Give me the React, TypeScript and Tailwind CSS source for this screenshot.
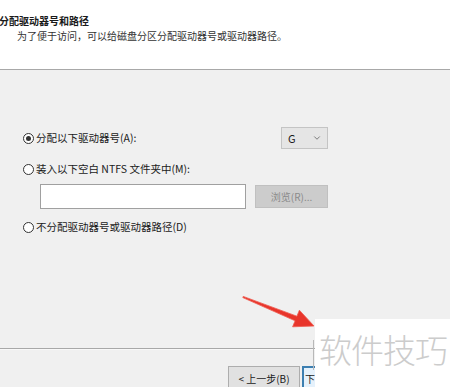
import { ChevronDown } from "lucide-react"

function Radio({ checked }: { checked?: boolean }) {
    return (
        <span className="w-[11px] h-[11px] rounded-full border border-[#333333] bg-white flex items-center justify-center shrink-0">
            {checked && <span className="w-[5px] h-[5px] rounded-full bg-[#333333]" />}
        </span>
    )
}

export default function App() {
    const font = { fontFamily: '"Noto Sans CJK SC", "Noto Sans", sans-serif' }

    return (
        <div className="relative w-[450px] h-[387px] overflow-hidden bg-[#f0f0f0] text-[10.5px] text-[#1a1a1a]" style={font}>
            {/* Header */}
            <div className="h-[70px] bg-white border-b border-[#a8a8a8] pt-[14px]">
                <div className="font-bold text-[10px] leading-[14px] -ml-[1px]">分配驱动器号和路径</div>
                <div className="pl-[17px] mt-[1px] text-[10px] leading-[14px] text-[#333333]">为了便于访问，可以给磁盘分区分配驱动器号或驱动器路径。</div>
            </div>

            {/* Body */}
            <div className="h-[279px] pt-[57px] border-b border-[#a8a8a8]">
                <div className="flex items-center w-[328px] pl-[23px] h-[22px]">
                    <Radio checked />
                    <span className="ml-[2px] leading-[16px]">分配以下驱动器号(A):</span>
                    <div className="ml-auto w-[47px] h-[22px] bg-[#e5e5e5] border border-[#c4c4c4] flex items-center justify-between pl-[6px] pr-[5px]">
                        <span className="text-[11px]">G</span>
                        <ChevronDown size={10} strokeWidth={2} className="text-[#666666]" />
                    </div>
                </div>
                <div className="flex items-center pl-[23px] h-[16px] mt-[12px]">
                    <Radio />
                    <span className="ml-[2px] leading-[16px]">装入以下空白 NTFS 文件夹中(M):</span>
                </div>
                <div className="flex items-center pl-[40px] mt-[7px] gap-[9px]">
                    <div className="w-[206px] h-[25px] bg-white border border-[#a0a0a0]" />
                    <div className="w-[73px] h-[23px] bg-[#cccccc] border border-[#c0c0c0] flex items-center justify-center text-[10px] text-[#8a8a8a]">浏览(R)...</div>
                </div>
                <div className="flex items-center pl-[23px] h-[16px] mt-[10px]">
                    <Radio />
                    <span className="ml-[2px] leading-[16px]">不分配驱动器号或驱动器路径(D)</span>
                </div>
            </div>

            {/* Footer buttons */}
            <div className="border-t border-[#f8f8f8] flex pl-[228px] pt-[16px] gap-[2px]">
                <div className="w-[72px] h-[24px] bg-[#e1e1e1] border border-[#adadad] flex items-center justify-center text-[10px]">&lt; 上一步(B)</div>
                <div className="w-[13px] h-[24px] bg-[#e5f1fb] border-2 border-r-0 border-[#3c7fb1] flex items-center pl-[1px] text-[10px]">下</div>
            </div>

            {/* Watermark */}
            <div className="absolute left-[315px] top-[319px] w-[135px] h-[68px] bg-white">
                <div className="absolute left-[-2px] top-[21px] w-[1px] h-[30px] bg-[#b8b8b8]" />
                <div className="mt-[10px] pl-[4px] text-[33px] leading-[40px] font-light text-[#cccccc] tracking-[-1px]">软件技巧</div>
            </div>

            {/* Red arrow */}
            <svg className="absolute left-0 top-0" width="450" height="387" viewBox="0 0 450 387">
                <polygon
                    points="243.2,296.4 296.9,316.2 299.4,310.2 314,326 292.6,326.8 295.1,320.8 242.8,297.6"
                    fill="#e8352b"
                    stroke="#ef5a4f"
                    strokeWidth="0.8"
                    strokeLinejoin="round"
                />
            </svg>
        </div>
    )
}
